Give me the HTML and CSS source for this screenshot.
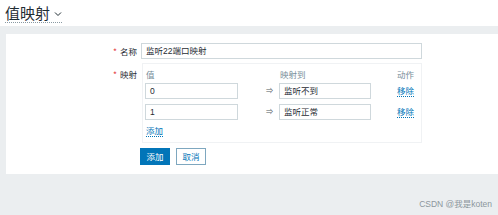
FILE: index.html
```html
<!DOCTYPE html>
<html lang="zh">
<head>
<meta charset="utf-8">
<link rel="stylesheet" href="styles.css">
</head>
<body>
<header class="header">
  <h1 class="title">值映射 <svg class="chev" width="8" height="6" viewBox="0 0 8 6"><path d="M1 1.5 L4 4.5 L7 1.5" fill="none" stroke="#1f2c33" stroke-width="1"/></svg></h1>
</header>
<main class="main">
  <section class="panel">
    <div class="form">
      <div class="label"><span class="req">*</span> 名称</div>
      <div class="field"><div class="input wide">监听22端口映射</div></div>

      <div class="label lab-map"><span class="req">*</span> 映射</div>
      <div class="field">
        <div class="table">
          <div class="th">值</div><div class="th"></div><div class="th">映射到</div><div class="th act">动作</div>
          <div class="td"><div class="input">0</div></div><div class="td arrow">⇒</div><div class="td"><div class="input">监听不到</div></div><div class="td act"><span class="link">移除</span></div>
          <div class="td"><div class="input">1</div></div><div class="td arrow">⇒</div><div class="td"><div class="input">监听正常</div></div><div class="td act"><span class="link">移除</span></div>
          <div class="td addrow"><span class="link">添加</span></div>
        </div>
      </div>

      <div></div>
      <div class="buttons">
        <span class="btn primary">添加</span>
        <span class="btn secondary">取消</span>
      </div>
    </div>
  </section>
  <div class="footer"><span class="wm">CSDN @我是koten</span></div>
</main>
</body>
</html>
```
FILE: styles.css
```css
* { box-sizing: border-box; }
body {
  margin: 0;
  background: #ebeef0;
  font-family: "Liberation Sans", "Noto Sans CJK SC", Arial, sans-serif;
  color: #1f2c33;
  font-size: 9px;
  width: 498px;
  height: 215px;
  overflow: hidden;
}
.header {
  background: #ffffff;
  height: 26px;
  padding: 4px 0 0 5px;
}
.title {
  margin: 0;
  font-family: "Noto Sans CJK SC", sans-serif;
  font-weight: normal;
  font-size: 15px;
  line-height: 18px;
  display: inline-flex;
  align-items: center;
  gap: 4px;
  border-bottom: 1px dotted #8a9aa3;
  color: #1f2c33;
}
.chev { margin-top: 2px; }
.main { padding-top: 8px; }
.panel {
  margin-left: 6px;
  background: #ffffff;
  height: 140px;
  padding-top: 9px;
}
.form {
  display: grid;
  grid-template-columns: 135px 282px;
  column-gap: 0;
  row-gap: 4px;
}
.label {
  text-align: right;
  padding-right: 4px;
  line-height: 16px;
  font-family: "Noto Sans CJK SC", sans-serif;
  font-size: 8.5px;
}
.lab-map { padding-top: 3px; }
.req { color: #e54545; margin-right: 1px; }
.input {
  height: 16px;
  border: 1px solid #cfd8dc;
  background: #fff;
  padding-left: 4px;
  line-height: 14px;
  font-size: 8.5px;
  font-family: "Liberation Sans", "Noto Sans CJK SC", sans-serif;
}
.wide { width: 281px; }
.table {
  margin-left: 1px;
  width: 280px;
  border: 1px solid #f0f2f4;
  padding: 2px 0 3px 2px;
  display: grid;
  grid-template-columns: 93px 41px 92px 1fr;
  row-gap: 5px;
}
.th {
  color: #768d99;
  font-family: "Noto Sans CJK SC", sans-serif;
  font-size: 8.5px;
  line-height: 14px;
  padding-top: 1px;
  padding-left: 1px;
  height: 12px;
}
.th.act, .td.act { text-align: right; padding-right: 7px; }
.td { line-height: 16px; }
.arrow { text-align: right; padding-right: 6px; font-size: 7px; color: #4f5b62; }
.link {
  color: #0275b8;
  font-family: "Noto Sans CJK SC", sans-serif;
  font-size: 8.5px;
  border-bottom: 1px dotted #0275b8;
  line-height: 11px;
  display: inline-block;
}
.addrow { grid-column: 1 / -1; padding-left: 1px; margin-top: -2px; }
.buttons {
  display: flex;
  gap: 6px;
  margin-top: 1px;
  margin-left: -1px;
}
.btn {
  display: inline-block;
  height: 17px;
  width: 30px;
  text-align: center;
  line-height: 15px;
  font-family: "Noto Sans CJK SC", sans-serif;
  font-size: 8.5px;
}
.primary { background: #0275b8; color: #fff; border: 1px solid #0275b8; }
.secondary { background: #fff; color: #0275b8; border: 1px solid #7ea7bf; }
.footer {
  display: flex;
  justify-content: flex-end;
  padding: 23px 6px 0 0;
}
.wm {
  color: #8c969c;
  font-size: 8.5px;
  font-family: "Liberation Sans", "Noto Sans CJK SC", sans-serif;
}
```
